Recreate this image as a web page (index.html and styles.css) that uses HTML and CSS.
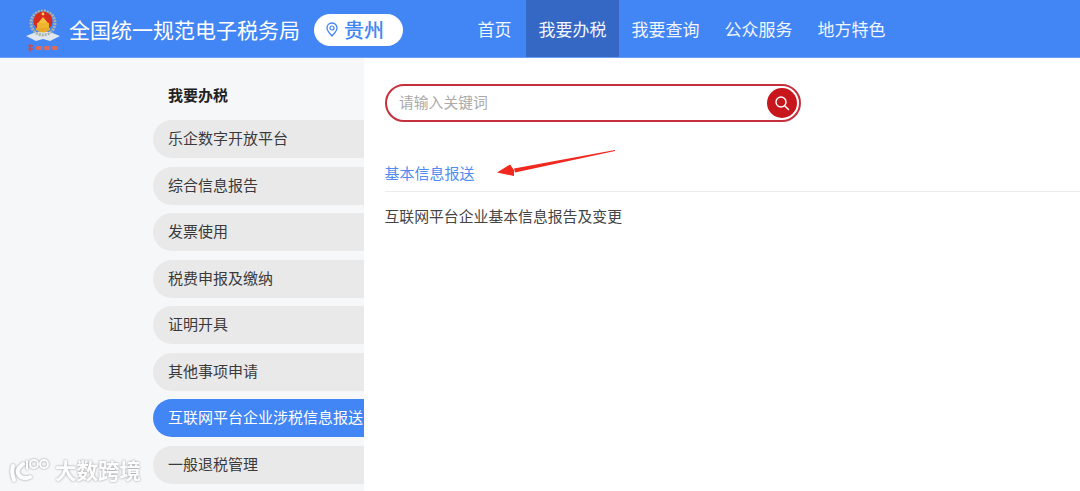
FILE: index.html
```html
<!DOCTYPE html>
<html lang="zh-CN">
<head>
<meta charset="utf-8">
<title>全国统一规范电子税务局</title>
<link rel="stylesheet" href="styles.css">
</head>
<body>
<header class="topbar">
  <div class="emblem">
    <svg width="36" height="46" viewBox="0 0 36 46">
      <path d="M1 30 L11 26 L25 26 L35 30 L25 35 L18 33 L11 35 Z" fill="#dfe6ee"/>
      <circle cx="18" cy="17" r="12" fill="none" stroke="#a9b3ab" stroke-width="3" stroke-dasharray="2 1"/>
      <circle cx="18" cy="15" r="9.5" fill="#d92a1e"/>
      <rect x="12" y="17" width="12" height="5" fill="#efb52e"/>
      <path d="M13 17 L18 11 L23 17 Z" fill="#f2c23e"/>
      <circle cx="18" cy="8" r="1.4" fill="#f6d24c"/>
      <path d="M11 24 Q18 29 25 24 L25 22 L11 22 Z" fill="#e8a92a"/>
      <path d="M5 38 L5 46 M3 40 H8 M3 43 H8" stroke="#d8433a" stroke-width="1.1"/>
      <rect x="11" y="40" width="6" height="4" rx="1" fill="#dd6a5f"/>
      <rect x="19" y="40" width="6" height="4" rx="1" fill="#dd6a5f"/>
      <rect x="27" y="40" width="6" height="4" rx="1" fill="#dd6a5f"/>
    </svg>
  </div>
  <div class="site-title">全国统一规范电子税务局</div>
  <div class="region">
    <svg class="pin" width="12" height="15" viewBox="0 0 12 15">
      <path d="M6 1 C3 1 1 3.2 1 6 C1 9.2 4.4 12 6 14 C7.6 12 11 9.2 11 6 C11 3.2 9 1 6 1 Z" fill="none" stroke="#4285f4" stroke-width="1.3"/>
      <circle cx="6" cy="6" r="2" fill="none" stroke="#4285f4" stroke-width="1.2"/>
    </svg>
    <span>贵州</span>
  </div>
  <nav class="nav">
    <a class="nav-item nav-home">首页</a>
    <a class="nav-item nav-active">我要办税</a>
    <a class="nav-item">我要查询</a>
    <a class="nav-item">公众服务</a>
    <a class="nav-item">地方特色</a>
  </nav>
</header>
<div class="page">
  <aside class="sidebar">
    <h2 class="side-title">我要办税</h2>
    <ul class="side-list">
      <li class="side-item">乐企数字开放平台</li>
      <li class="side-item">综合信息报告</li>
      <li class="side-item">发票使用</li>
      <li class="side-item">税费申报及缴纳</li>
      <li class="side-item">证明开具</li>
      <li class="side-item">其他事项申请</li>
      <li class="side-item side-active">互联网平台企业涉税信息报送</li>
      <li class="side-item">一般退税管理</li>
    </ul>
  </aside>
  <main class="content">
    <div class="search">
      <span class="placeholder">请输入关键词</span>
      <span class="search-btn">
        <svg width="16" height="16" viewBox="0 0 16 16">
          <circle cx="7" cy="7" r="5" fill="none" stroke="#fff" stroke-width="1.4"/>
          <path d="M10.7 10.7 L14.5 14.5" stroke="#fff" stroke-width="1.5" stroke-linecap="round"/>
        </svg>
      </span>
    </div>
    <h3 class="section-title">基本信息报送</h3>
    <p class="section-link">互联网平台企业基本信息报告及变更</p>
    <svg class="arrow" width="124" height="30" viewBox="0 0 124 30">
      <path d="M121 2 L20 20.5 L21 24.5 L121 3 Z" fill="#f0281e"/>
      <path d="M3 24.5 L16 16.5 L20 22 L20 28 Z" fill="#f0281e"/>
    </svg>
  </main>
</div>
<div class="watermark">
  <svg width="42" height="28" viewBox="0 0 42 28">
    <path d="M4 10 Q2 17 5 24 M14 8 Q6 14 10 19 Q14 24 21 21" fill="none" stroke="#fff" stroke-width="4" stroke-linecap="round"/>
    <path d="M18 5 L18 13" stroke="#fff" stroke-width="2" stroke-linecap="round"/>
    <circle cx="25" cy="8" r="4" fill="none" stroke="#fff" stroke-width="2"/>
    <circle cx="35" cy="8" r="4" fill="none" stroke="#fff" stroke-width="2"/>
  </svg>
  <span class="wm-text">大数跨境</span>
</div>
</body>
</html>
```
FILE: styles.css
```css
* { box-sizing: border-box; }
html, body { margin: 0; padding: 0; height: 491px; overflow: hidden; background: #fff; }
body {
  font-family: "Noto Sans CJK SC", "Liberation Sans", sans-serif;
  color: #333;
  position: relative;
}
.topbar {
  height: 58px;
  background: #4285f4;
  border-bottom: 1px solid #6a9ff2;
  display: flex;
  align-items: center;
  padding-left: 25px;
  color: #fff;
}
.emblem { width: 36px; height: 46px; margin-top: 1px; }
.emblem svg { display: block; }
.site-title { font-size: 21px; line-height: 58px; margin-left: 8px; white-space: nowrap; }
.region {
  margin: 2px 0 0 14px;
  width: 89px;
  height: 32px;
  border-radius: 16px;
  background: #fff;
  color: #4285f4;
  font-size: 20px;
  font-weight: 500;
  display: flex;
  align-items: center;
  padding-left: 12px;
  gap: 6px;
}
.pin { flex: none; }
.nav { display: flex; height: 57px; margin-left: 62px; }
.nav-item {
  padding: 0 12.5px;
  font-size: 17px;
  line-height: 57px;
  color: #f2f6fe;
}
.nav-home { padding-right: 14.5px; }
.nav-active { background: #3567c5; }
.page { display: flex; height: 433px; }
.sidebar {
  width: 364px;
  flex: none;
  background: #f6f7f9;
  padding-left: 152.5px;
}
.side-title {
  margin: 0;
  padding-left: 15.5px;
  font-size: 15px;
  font-weight: 700;
  line-height: 22px;
  padding-top: 26px;
  height: 62px;
  color: #222;
}
.side-list {
  list-style: none;
  margin: 0;
  padding: 0;
  display: flex;
  flex-direction: column;
  gap: 8.5px;
}
.side-item {
  height: 38px;
  line-height: 35.5px;
  padding-left: 15.5px;
  font-size: 15px;
  background: #e9e9ea;
  border-radius: 19px 0 0 19px;
  white-space: nowrap;
  color: #3a3a3a;
}
.side-active { background: #4285f4; color: #fff; }
.content { flex: 1; position: relative; padding: 26px 0 0 20.5px; background: #fff; }
.search {
  width: 416.5px;
  height: 38px;
  border: 2px solid #c5303c;
  border-radius: 19px;
  display: flex;
  align-items: center;
  justify-content: space-between;
  padding: 0 2px 3px 12.5px;
}
.placeholder { font-size: 14.8px; color: #aaa; }
.search-btn {
  width: 30px;
  height: 30px;
  margin-bottom: -3px;
  border-radius: 50%;
  background: #c8161d;
  display: flex;
  align-items: center;
  justify-content: center;
}
.section-title {
  margin: 40px 0 0;
  height: 30px;
  font-size: 15px;
  font-weight: 400;
  line-height: 21px;
  color: #4f8bf0;
  border-bottom: 1px solid #ececec;
}
.section-link {
  margin: 13px 0 0;
  font-size: 14.85px;
  line-height: 22px;
  color: #444;
}
.arrow { position: absolute; left: 130px; top: 90px; }
.watermark {
  position: absolute;
  left: 9px;
  top: 456px;
  display: flex;
  align-items: center;
  gap: 4px;
  opacity: 0.8;
  filter: drop-shadow(0 0 1px rgba(0,0,0,.5));
}
.wm-text { font-size: 21.5px; line-height: 28px; color: #fff; font-weight: 700; }
```
